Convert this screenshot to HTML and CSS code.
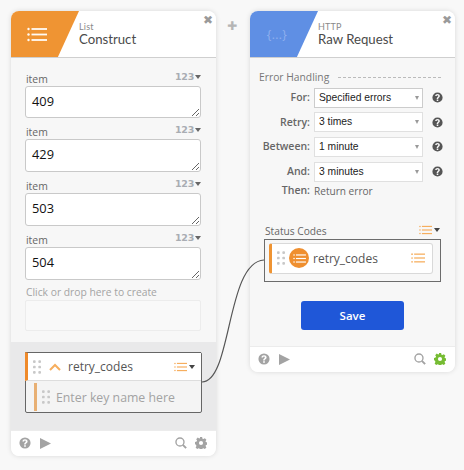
FILE: index.html
```html
<!DOCTYPE html>
<html lang="en">
<head>
<meta charset="utf-8">
<title>Flow</title>
<link rel="stylesheet" href="styles.css">
</head>
<body>
<svg width="0" height="0" class="defs">
  <symbol id="list" viewBox="0 0 20 14">
    <circle cx="1.5" cy="1.5" r="1.2"/><circle cx="1.5" cy="7" r="1.2"/><circle cx="1.5" cy="12.5" r="1.2"/>
    <rect x="4.5" y="0.6" width="15.5" height="1.8"/><rect x="4.5" y="6.1" width="15.5" height="1.8"/><rect x="4.5" y="11.6" width="15.5" height="1.8"/>
  </symbol>
  <symbol id="help" viewBox="0 0 14 14">
    <path fill-rule="evenodd" d="M7 .5a6.5 6.5 0 1 1 0 13 6.5 6.5 0 0 1 0-13zM6 9.6v1.9h2V9.6zM7 2.6c-1.7 0-2.9 1-3 2.6h1.9c.1-.6.5-1 1.100-1 .6 0 1 .4 1 .9 0 .5-.3.8-.8 1.200-.8.6-1.200 1.100-1.200 2.100V8.800h1.900v-.2c0-.5.2-.8.8-1.200.8-.6 1.300-1.200 1.300-2.200 0-1.600-1.300-2.600-3-2.600z"/>
  </symbol>
  <symbol id="gear" viewBox="0 0 14 14">
    <path fill-rule="evenodd" d="M5.700 0h2.600l.4 1.900 1.100.5 1.700-1 1.800 1.800-1 1.700.5 1.100 1.900.4v2.600l-1.900.4-.5 1.100 1 1.700-1.800 1.800-1.700-1-1.100.5-.4 1.900H5.700l-.4-1.900-1.100-.5-1.700 1-1.800-1.800 1-1.700-.5-1.100L0 8.300V5.700l1.900-.4.5-1.100-1-1.700 1.800-1.800 1.700 1 1.100-.5zM7 4.600a2.400 2.400 0 1 0 0 4.800 2.400 2.400 0 0 0 0-4.800z"/>
  </symbol>
  <symbol id="search" viewBox="0 0 14 14">
    <circle cx="5.800" cy="5.800" r="4.700" fill="none" stroke="currentColor" stroke-width="1.600"/>
    <path d="M9.200 9.200L13 13" fill="none" stroke="currentColor" stroke-width="2.200"/>
  </symbol>
  <symbol id="grip" viewBox="0 0 9 15">
    <rect x="0" y="0" width="3" height="3" rx="1"/><rect x="6" y="0" width="3" height="3" rx="1"/>
    <rect x="0" y="6" width="3" height="3" rx="1"/><rect x="6" y="6" width="3" height="3" rx="1"/>
    <rect x="0" y="12" width="3" height="3" rx="1"/><rect x="6" y="12" width="3" height="3" rx="1"/>
  </symbol>
</svg>

<main class="canvas">
  <section class="card card-list">
    <header class="head">
      <div class="badge badge-orange"><svg class="badge-icon"><use href="#list"/></svg></div>
      <div class="titles"><span class="app">List</span><span class="name">Construct</span></div>
      <span class="close">✖</span>
    </header>
    <div class="body body-list">
      <div class="items">
        <div class="item"><div class="item-top"><label>item</label><span class="type">123<i class="caret"></i></span></div><textarea>409</textarea></div>
        <div class="item"><div class="item-top"><label>item</label><span class="type">123<i class="caret"></i></span></div><textarea>429</textarea></div>
        <div class="item"><div class="item-top"><label>item</label><span class="type">123<i class="caret"></i></span></div><textarea>503</textarea></div>
        <div class="item"><div class="item-top"><label>item</label><span class="type">123<i class="caret"></i></span></div><textarea>504</textarea></div>
        <div class="create-label">Click or drop here to create</div>
        <div class="create-box"></div>
      </div>
      <div class="keys">
        <div class="key-block">
          <div class="key-row">
            <svg class="grip"><use href="#grip"/></svg>
            <svg class="chev" viewBox="0 0 12 8"><path d="M1 7l5-5 5 5" fill="none" stroke="currentColor" stroke-width="2"/></svg>
            <span class="key-name">retry_codes</span>
            <svg class="mini-list"><use href="#list"/></svg><i class="caret dark"></i>
          </div>
          <div class="key-new">
            <svg class="grip"><use href="#grip"/></svg>
            <span class="key-placeholder">Enter key name here</span>
          </div>
        </div>
      </div>
    </div>
    <footer class="foot">
      <svg class="ico"><use href="#help"/></svg>
      <svg class="play" viewBox="0 0 11 11"><path d="M0 0l11 5.500L0 11z"/></svg>
      <span class="spacer"></span>
      <svg class="ico"><use href="#search"/></svg>
      <svg class="ico"><use href="#gear"/></svg>
    </footer>
  </section>

  <div class="plus">✚</div>

  <section class="card card-http">
    <header class="head">
      <div class="badge badge-blue"><span class="braces">{...}</span></div>
      <div class="titles"><span class="app">HTTP</span><span class="name">Raw Request</span></div>
      <span class="close">✖</span>
    </header>
    <div class="body body-http">
      <div class="section-title"><span>Error Handling</span><i class="dash"></i></div>
      <div class="form-row"><label>For:</label><div class="select"><span>Specified errors</span><i class="sel-caret"></i></div><svg class="q"><use href="#help"/></svg></div>
      <div class="form-row"><label>Retry:</label><div class="select"><span>3 times</span><i class="sel-caret"></i></div><svg class="q"><use href="#help"/></svg></div>
      <div class="form-row"><label>Between:</label><div class="select"><span>1 minute</span><i class="sel-caret"></i></div><svg class="q"><use href="#help"/></svg></div>
      <div class="form-row"><label>And:</label><div class="select"><span>3 minutes</span><i class="sel-caret"></i></div><svg class="q"><use href="#help"/></svg></div>
      <div class="then-row"><label>Then:</label><span>Return error</span></div>
      <div class="status-top"><span>Status Codes</span><span class="status-type"><svg class="mini-list"><use href="#list"/></svg><i class="caret dark"></i></span></div>
      <div class="drop">
        <div class="pill">
          <svg class="grip"><use href="#grip"/></svg>
          <span class="pill-circle"><svg class="pill-icon"><use href="#list"/></svg></span>
          <span class="pill-name">retry_codes</span>
          <svg class="mini-list big"><use href="#list"/></svg>
        </div>
      </div>
      <button class="save" type="button">Save</button>
    </div>
    <footer class="foot">
      <svg class="ico"><use href="#help"/></svg>
      <svg class="play" viewBox="0 0 11 11"><path d="M0 0l11 5.500L0 11z"/></svg>
      <span class="spacer"></span>
      <svg class="ico"><use href="#search"/></svg>
      <svg class="ico green"><use href="#gear"/></svg>
    </footer>
  </section>

  <svg class="wire" width="464" height="470" viewBox="0 0 464 470"><path d="M202 382C232 382 226 262 264 260" fill="none" stroke="#555" stroke-width="1.200"/></svg>
</main>
</body>
</html>
```

FILE: styles.css
```css
* { box-sizing: border-box; }
html, body { margin: 0; padding: 0; }
body { width: 464px; height: 470px; background: #f8f8f8; overflow: hidden; font-family: "Open Sans", sans-serif; color: #555; }
.defs { position: absolute; }
.canvas { position: relative; width: 464px; height: 470px; }

.card { position: absolute; top: 11px; width: 205px; background: #f7f7f7; border-radius: 8px; box-shadow: 0 0 5px rgba(0,0,0,.13); display: flex; flex-direction: column; overflow: hidden; }
.card-list { left: 11px; height: 445px; }
.card-http { left: 250px; height: 361px; }

.head { position: relative; height: 47px; flex: none; background: #fff; border-bottom: 1px solid #cfcfcf; display: flex; }
.badge { width: 68px; height: 46px; flex: none; clip-path: polygon(0 0, 100% 0, 69% 100%, 0 100%); display: flex; align-items: center; justify-content: center; padding-right: 16px; }
.badge-orange { background: #ef9433; }
.badge-blue { background: #5f8fe4; }
.badge-icon { width: 20px; height: 15px; fill: #fff; opacity: .95; }
.braces { font: 400 12px "Open Sans", sans-serif; color: #8fb0ee; letter-spacing: .4px; padding-left: 2px; }
.titles { display: flex; flex-direction: column; padding-top: 10px; }
.app { font: 400 9px/11px Lato, sans-serif; color: #8a8a8a; letter-spacing: .2px; }
.name { font: 400 13.200px/15px Lato, sans-serif; color: #4a4a4a; }
.close { position: absolute; right: 3px; top: 3px; font: 700 12px/13px "DejaVu Sans", sans-serif; color: #9a9a9a; }

.body { flex: 1; display: flex; flex-direction: column; min-height: 0; }
.items { flex: 1; padding: 12.700px 14px 0; }
.item-top { display: flex; justify-content: space-between; align-items: flex-end; height: 15px; }
.item-top label { font-size: 10.400px; line-height: 15px; color: #666; margin: 0 0 -1px 1px; }
.type { font: 700 9.500px/12px "DejaVu Sans", sans-serif; color: #a9adb3; display: flex; align-items: center; margin-bottom: 3px; margin-right: 1px; letter-spacing: -.3px; }
.caret { width: 0; height: 0; border: 3.500px solid transparent; border-top: 4px solid #666; border-bottom: 0; margin-left: 1px; display: inline-block; flex: none; }
.caret.dark { border-top-color: #444; }
textarea { display: block; width: 176px; height: 32.600px; margin: 0; padding: 4px 6px; border: 1px solid #c9c9c9; border-radius: 3px; background: #fff; font: 400 12.800px/20px "Open Sans", sans-serif; color: #111; outline: none; }
.item + .item { margin-top: 6.200px; }
.create-label { font-size: 10.300px; line-height: 15px; color: #a4a4a4; margin: 5.300px 0 0 1px; }
.create-box { width: 176px; height: 31px; background: #f9f9f9; border: 1px solid #ececec; border-radius: 2px; }

.keys { height: 88px; flex: none; background: #e9e9ea; padding: 10px 14px 0; }
.key-block { width: 177px; height: 61px; border: 1px solid #666; border-radius: 2px; background: #f4f4f4; }
.key-row { height: 29px; background: #fff; border-left: 3px solid #ef8a2a; border-bottom: 1px solid #ddd; display: flex; align-items: center; padding-left: 5px; margin-top: -1px; margin-left: -1px; border-top: 1px solid #666; }
.grip { width: 8px; height: 14px; fill: #c8c8c8; flex: none; }
.chev { width: 12px; height: 8px; color: #f6ae5e; margin: 0 0 0 8px; flex: none; }
.key-name { font-size: 12px; color: #555; margin-left: 7px; flex: 1; }
.mini-list { width: 13px; height: 10px; fill: #f6ae5e; flex: none; }
.key-row .mini-list { margin-right: 1px; }
.key-row .caret { margin-right: 6px; margin-left: 1px; }
.key-new { margin-top: 2px; margin-left: 8px; height: 28px; border-left: 3px solid #e8b074; display: flex; align-items: center; padding-left: 5px; }
.key-placeholder { font-size: 12.300px; color: #a3a3a3; margin-left: 6px; }

.foot { height: 26px; flex: none; background: #fff; border-top: 1px solid #ececec; display: flex; align-items: center; padding: 0 9px 1px 8px; gap: 8.500px; }
.ico { width: 12px; height: 12px; fill: #a3a3a3; color: #a3a3a3; flex: none; }
.ico.green { fill: #76bc33; }
.play { width: 11px; height: 11px; fill: #a3a3a3; flex: none; }
.spacer { flex: 1; }

.plus { position: absolute; left: 227px; top: 19px; font: 700 12px/14px "DejaVu Sans", sans-serif; color: #b5b5b5; }

.body-http { padding: 11px 14px 0 8px; }
.section-title { display: flex; align-items: center; font-size: 10.300px; line-height: 16px; color: #777; height: 16px; white-space: nowrap; margin-left: 1px; }
.dash { width: 103px; margin-left: 9px; border-top: 1px dashed #bbb; flex: none; }
.form-row { display: flex; align-items: center; height: 20px; margin-top: 4.700px; }
.section-title + .form-row { margin-top: 2.500px; }
.form-row label, .then-row label { width: 52px; text-align: right; font: 600 10.500px/15px "Open Sans", sans-serif; color: #666; flex: none; white-space: nowrap; }
.select { width: 109px; height: 20px; margin-left: 4px; background: #fff; border: 1px solid #e0e0e0; display: flex; align-items: center; padding-left: 4px; font: 400 10.300px/14px "Liberation Sans", sans-serif; color: #222; position: relative; flex: none; }
.section-title + .form-row .select { border-color: #ccc; }
.sel-caret { position: absolute; right: 3px; top: 7px; width: 0; height: 0; border: 2.500px solid transparent; border-top: 4px solid #999; border-bottom: 0; }
.q { width: 11px; height: 11px; fill: #555; margin-left: 9px; flex: none; }
.then-row { display: flex; align-items: center; height: 18px; font-size: 10.100px; color: #666; }
.then-row span { margin-left: 4px; }
.status-top { display: flex; justify-content: space-between; align-items: flex-end; height: 16px; margin: 22.400px 0 0 7px; font-size: 10.200px; color: #666; }
.status-type { display: flex; align-items: center; margin-bottom: 3px; margin-right: 1px; }
.status-type .caret { margin-left: 2px; }
.drop { width: 177px; height: 43px; margin: 1px 0 0 6px; border: 1px solid #6c6c6c; padding: 3px 7px 0 4px; }
.pill { height: 31px; background: #fff; border: 1px solid #d9d9d9; border-left: 3px solid #ef9433; border-radius: 3px; display: flex; align-items: center; padding-left: 5px; }
.pill-circle { width: 20px; height: 20px; border-radius: 50%; background: #ef8f2f; display: flex; align-items: center; justify-content: center; margin-left: 4px; flex: none; }
.pill-icon { width: 13px; height: 9px; fill: #fff; }
.pill-name { font-size: 12px; color: #555; margin-left: 4px; flex: 1; }
.mini-list.big { width: 14px; height: 10px; margin-right: 7px; }
.save { display: block; width: 103px; height: 29px; margin: 19px 0 0 43px; background: #1f57d8; border: 0; border-radius: 3px; color: #fff; font: 600 11.500px/29px "Open Sans", sans-serif; padding: 0; }

.wire { position: absolute; left: 0; top: 0; pointer-events: none; }
```
